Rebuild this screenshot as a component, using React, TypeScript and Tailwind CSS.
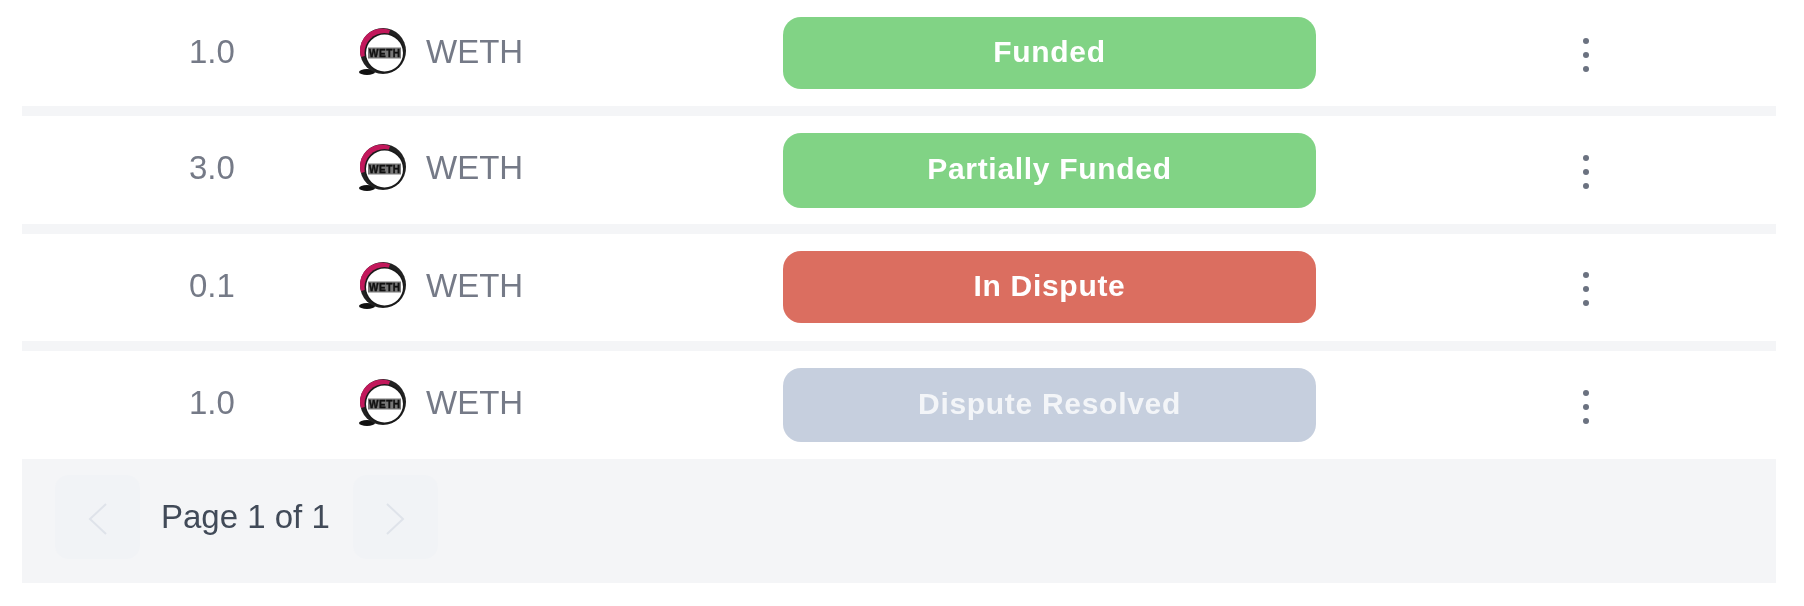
function Weth() {
  return (
    <svg width="52" height="52" viewBox="0 0 52 52" className="shrink-0">
      <ellipse cx="10" cy="46" rx="8" ry="3" fill="#111" />
      <circle cx="26" cy="25" r="23" fill="#222" />
      <path d="M4 31 A22 22 0 0 1 33 4 L26 25 Z" fill="#c2185b" />
      <circle cx="27.5" cy="27" r="20" fill="#1a1a1a" />
      <circle cx="27.5" cy="27" r="18.5" fill="#fff" />
      <rect x="11" y="21.5" width="33" height="11" fill="#777" />
      <text x="27.5" y="31" textAnchor="middle" fontSize="10" textLength="31" fontWeight="700" fill="#111" fontFamily="Liberation Sans, sans-serif" stroke="#111" strokeWidth="0.4">WETH</text>
    </svg>
  );
}

function Kebab() {
  return (
    <div className="w-[6px] flex flex-col gap-[8px] items-center">
      <span className="w-[6px] h-[6px] rounded-full bg-[#6b7280]" />
      <span className="w-[6px] h-[6px] rounded-full bg-[#6b7280]" />
      <span className="w-[6px] h-[6px] rounded-full bg-[#6b7280]" />
    </div>
  );
}

const rows = [
  { amount: "1.0", label: "Funded", badge: "bg-[#81d385] text-white", h: "h-[106px]", b: "h-[72px]", offset: "-mt-[1px]", text: "-mt-[2px]" },
  { amount: "3.0", label: "Partially Funded", badge: "bg-[#81d385] text-white", h: "h-[108px]", b: "h-[75px]", offset: "mt-[0px]", text: "-mt-[4px]" },
  { amount: "0.1", label: "In Dispute", badge: "bg-[#db6e60] text-white", h: "h-[107px]", b: "h-[72px]", offset: "-mt-[1px]", text: "-mt-[3px]" },
  { amount: "1.0", label: "Dispute Resolved", badge: "bg-[#c6cfde] text-[#f3f5f8]", h: "h-[108px]", b: "h-[74px]", offset: "mt-[0px]", text: "-mt-[4px]" },
];

export default function App() {
  return (
    <div className="w-[1804px] h-[606px] bg-white overflow-hidden pl-[22px] font-['Liberation_Sans',sans-serif]">
      <div className="w-[1754px] bg-[#f4f5f7] flex flex-col gap-[10px] blur-[0.5px]">
        {rows.map((r, i) => (
          <div key={i} className={`${r.h} bg-white flex items-center text-[33px] text-[#757a87]`}>
            <div className={`w-[335px] shrink-0 pl-[167px] ${r.text}`}>{r.amount}</div>
            <div className={`w-[426px] shrink-0 flex items-center gap-[17px] ${r.text}`}>
              <Weth />
              <span>WETH</span>
            </div>
            <div className={`w-[533px] shrink-0 ${r.b} ${r.badge} ${r.offset} pb-[3px] rounded-[18px] flex items-center justify-center text-[30px] font-bold tracking-[0.7px]`}>
              {r.label}
            </div>
            <div className="w-[460px] shrink-0 pl-[267px] mt-[3px]">
              <Kebab />
            </div>
          </div>
        ))}
        <div className="h-[124px] -mt-[10px] pt-[16px] pb-[24px] flex items-center pl-[33px] text-[33px] text-[#414a58]">
          <div className="w-[85px] h-[84px] pt-[3px] rounded-[14px] bg-[#f1f3f6] flex items-center justify-center">
            <svg width="24" height="36" viewBox="0 0 24 36" fill="none" stroke="#dfe3ea" strokeWidth="2"><path d="M20 3 L4 18 L20 33" /></svg>
          </div>
          <span className="ml-[21px] mr-[23px]">Page 1 of 1</span>
          <div className="w-[85px] h-[84px] pt-[3px] rounded-[14px] bg-[#f1f3f6] flex items-center justify-center">
            <svg width="24" height="36" viewBox="0 0 24 36" fill="none" stroke="#dfe3ea" strokeWidth="2"><path d="M4 3 L20 18 L4 33" /></svg>
          </div>
        </div>
      </div>
    </div>
  );
}
